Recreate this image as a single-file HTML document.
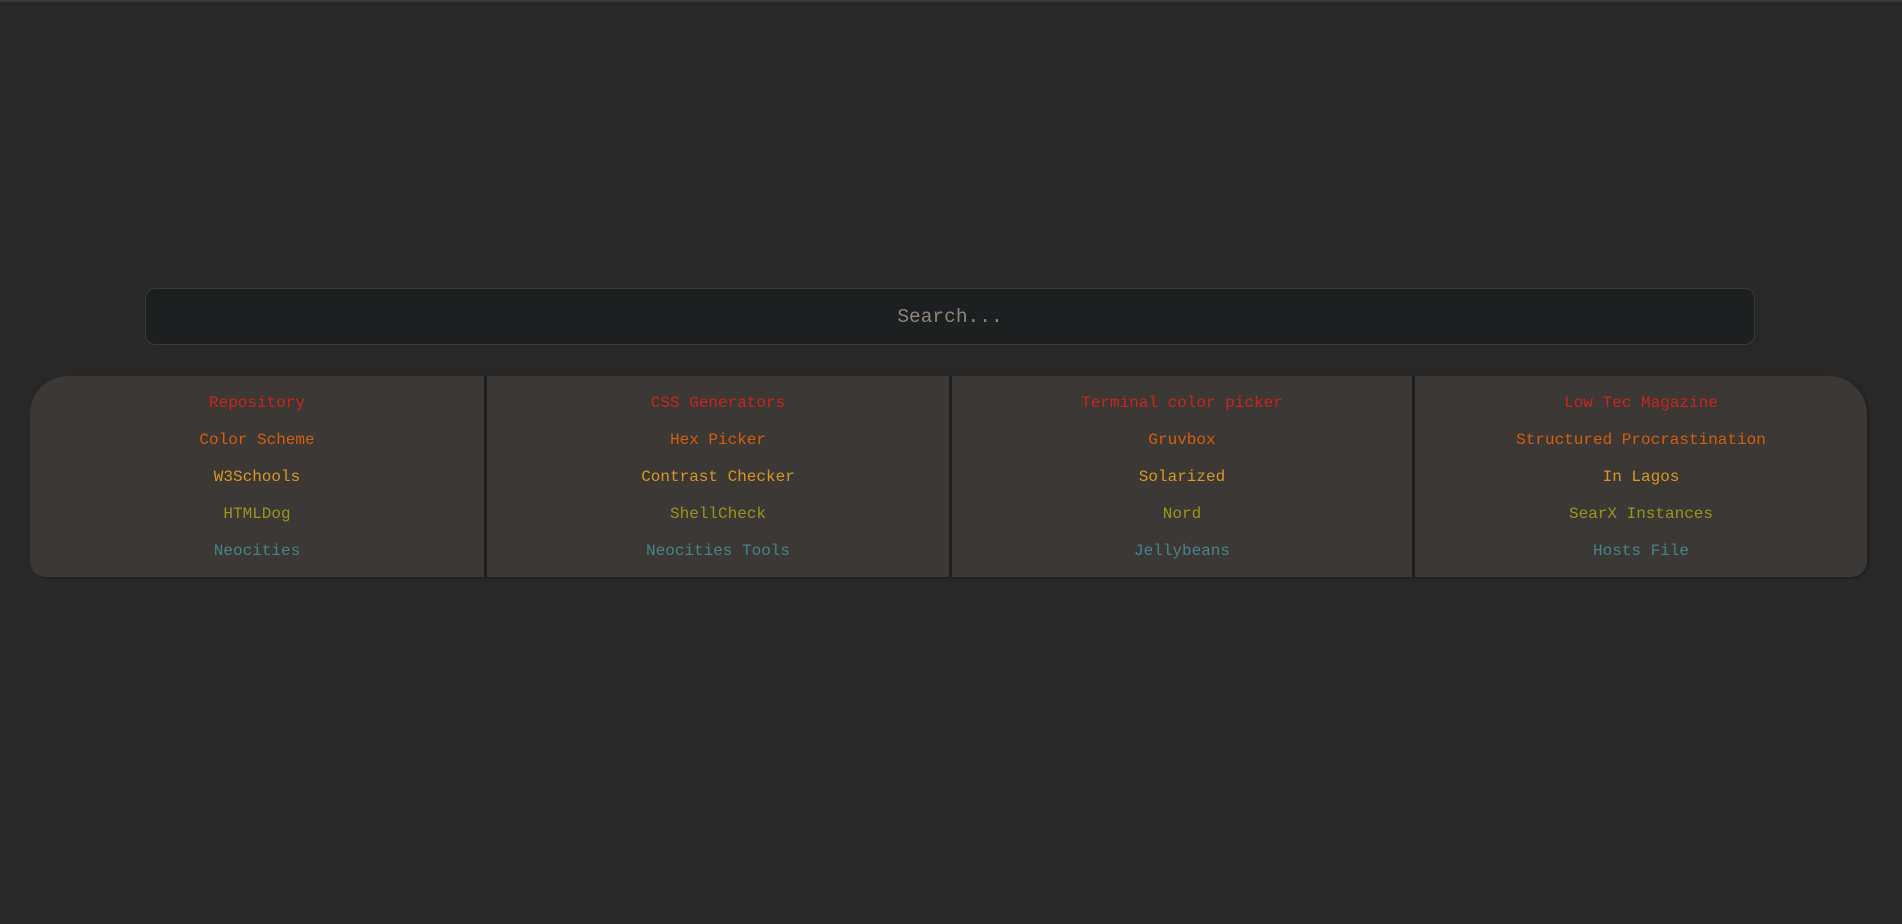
<!DOCTYPE html>
<html><head><style>
html,body{margin:0;padding:0;}
body{width:1902px;height:924px;background:#282828;border-top:2px solid #3a3a3a;box-sizing:border-box;position:relative;overflow:hidden;font-family:"Liberation Mono",monospace;}
.search{position:absolute;left:145px;top:286px;width:1610px;height:57px;box-sizing:border-box;background:#1d2021;border:1px solid #3c3836;border-radius:10px;color:#8f8678;font-size:19.5px;text-align:center;line-height:57px;}
.panel{position:absolute;left:30px;top:374px;width:1837px;height:201px;background:#3c3836;border-radius:38px 38px 16px 16px;display:flex;box-shadow:2px 1px 2px #1d2021;}
.col{text-align:center;padding-top:16px;box-sizing:border-box;}
.col+.col{border-left:3px solid #1d2021;}
.col div{height:37px;line-height:22px;font-size:16px;}
.r{color:#cc241d}.o{color:#d65d0e}.y{color:#d79921}.g{color:#98971a}.b{color:#458588}
</style></head><body>
<div class="search">Search...</div>
<div class="panel">
<div class="col" style="width:454px"><div class="r">Repository</div><div class="o">Color Scheme</div><div class="y">W3Schools</div><div class="g">HTMLDog</div><div class="b">Neocities</div></div>
<div class="col" style="width:465px"><div class="r">CSS Generators</div><div class="o">Hex Picker</div><div class="y">Contrast Checker</div><div class="g">ShellCheck</div><div class="b">Neocities Tools</div></div>
<div class="col" style="width:463px"><div class="r">Terminal color picker</div><div class="o">Gruvbox</div><div class="y">Solarized</div><div class="g">Nord</div><div class="b">Jellybeans</div></div>
<div class="col" style="width:455px"><div class="r">Low Tec Magazine</div><div class="o">Structured Procrastination</div><div class="y">In Lagos</div><div class="g">SearX Instances</div><div class="b">Hosts File</div></div>
</div>
</body></html>
